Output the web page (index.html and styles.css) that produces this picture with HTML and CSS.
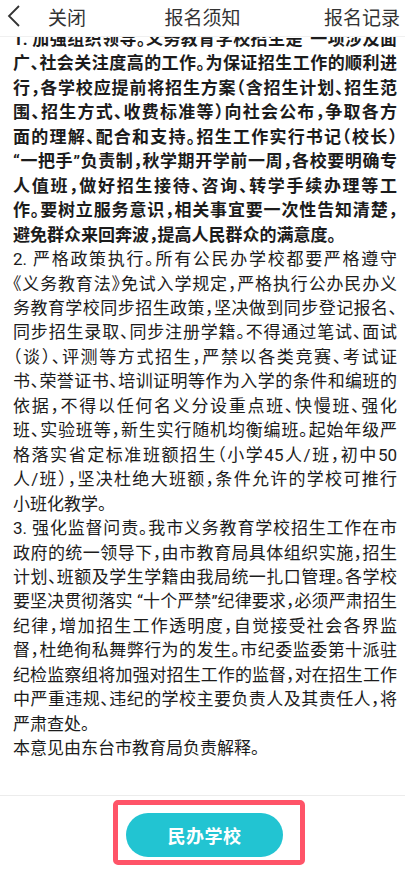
FILE: index.html
```html
<!DOCTYPE html>
<html lang="zh-CN">
<head>
    <meta charset="UTF-8">
    <meta name="viewport" content="width=device-width, initial-scale=1.0">
    <title>报名须知</title>
    <link rel="stylesheet" href="styles.css">
</head>
<body>
    <!-- 顶部导航 -->
    <div class="nav-bar">
        <div class="nav-left">
            <svg class="back-icon" width="14" height="24" viewBox="0 0 14 24">
                <polyline points="12,2 2,12 12,22" fill="none" stroke="#333" stroke-width="1.8" stroke-linejoin="miter"/>
            </svg>
            <span class="nav-close">关闭</span>
        </div>
        <div class="nav-title">报名须知</div>
        <div class="nav-right">报名记录</div>
    </div>

    <!-- 须知正文（已滚动），按截图逐行排版 -->
    <div class="notice-scroll">
        <div class="notice-text">
            <p class="strong">
                <span class="ln">1. 加强组织领导。义务教育学校招生是“一项涉及面</span>
                <span class="ln">广、社会关注度高的工作。为保证招生工作的顺利进</span>
                <span class="ln">行，各学校应提前将招生方案（含招生计划、招生范</span>
                <span class="ln">围、招生方式、收费标准等）向社会公布，争取各方</span>
                <span class="ln">面的理解、配合和支持。招生工作实行书记（校长）</span>
                <span class="ln">“一把手”负责制，秋学期开学前一周，各校要明确专</span>
                <span class="ln">人值班，做好招生接待、咨询、转学手续办理等工</span>
                <span class="ln">作。要树立服务意识，相关事宜要一次性告知清楚，</span>
                <span class="ln last">避免群众来回奔波，提高人民群众的满意度。</span>
            </p>
            <p>
                <span class="ln">2. 严格政策执行。所有公民办学校都要严格遵守</span>
                <span class="ln">《义务教育法》免试入学规定，严格执行公办民办义</span>
                <span class="ln">务教育学校同步招生政策，坚决做到同步登记报名、</span>
                <span class="ln">同步招生录取、同步注册学籍。不得通过笔试、面试</span>
                <span class="ln">（谈）、评测等方式招生，严禁以各类竞赛、考试证</span>
                <span class="ln">书、荣誉证书、培训证明等作为入学的条件和编班的</span>
                <span class="ln">依据，不得以任何名义分设重点班、快慢班、强化</span>
                <span class="ln">班、实验班等，新生实行随机均衡编班。起始年级严</span>
                <span class="ln">格落实省定标准班额招生（小学45人/班，初中50</span>
                <span class="ln">人/班），坚决杜绝大班额，条件允许的学校可推行</span>
                <span class="ln last">小班化教学。</span>
            </p>
            <p>
                <span class="ln">3. 强化监督问责。我市义务教育学校招生工作在市</span>
                <span class="ln">政府的统一领导下，由市教育局具体组织实施，招生</span>
                <span class="ln">计划、班额及学生学籍由我局统一扎口管理。各学校</span>
                <span class="ln">要坚决贯彻落实 “十个严禁”纪律要求，必须严肃招生</span>
                <span class="ln">纪律，增加招生工作透明度，自觉接受社会各界监</span>
                <span class="ln">督，杜绝徇私舞弊行为的发生。市纪委监委第十派驻</span>
                <span class="ln">纪检监察组将加强对招生工作的监督，对在招生工作</span>
                <span class="ln">中严重违规、违纪的学校主要负责人及其责任人，将</span>
                <span class="ln last">严肃查处。</span>
            </p>
            <p>
                <span class="ln last">本意见由东台市教育局负责解释。</span>
            </p>
        </div>
    </div>

    <!-- 底部按钮 -->
    <div class="footer">
        <button class="school-button">民办学校</button>
        <div class="mark-box"></div>
    </div>
</body>
</html>
```

FILE: styles.css
```css
/* 通用 */
* {
    box-sizing: border-box;
}

body {
    margin: 0;
    height: 100vh;
    display: flex;
    flex-direction: column;
    background: #fff;
    font-family: Roboto, "Noto Sans CJK SC", sans-serif;
    color: #1c1c1c;
    overflow: hidden;
}

/* 顶部导航 */
.nav-bar {
    position: relative;
    height: 37px;
    flex-shrink: 0;
    display: flex;
    align-items: center;
    justify-content: space-between;
    padding: 0 5px 4px 7px;
    background: #fff;
    border-bottom: 1px solid #f0f0f0;
    font-family: "Noto Sans CJK SC", sans-serif;
    font-size: 19px;
    color: #333;
    z-index: 2;
}

.nav-left {
    display: flex;
    align-items: center;
}

.back-icon {
    display: block;
}

.nav-close {
    margin-left: 27px;
}

.nav-title {
    position: absolute;
    left: 0;
    right: 0;
    top: 0;
    height: 33px;
    line-height: 33px;
    text-align: center;
    pointer-events: none;
}

/* 正文 */
.notice-scroll {
    flex: 1;
    overflow: hidden;
}

.notice-text {
    margin-top: -10px;
    padding: 0 8px 0 13px;
    font-size: 17px;
    line-height: 24.46px;
    font-feature-settings: "halt";
}

.notice-text p {
    margin: 0;
}

.notice-text .strong {
    font-weight: bold;
}

.ln {
    display: block;
    text-align: justify;
    text-align-last: justify;
}

.ln.last {
    text-align-last: left;
}

/* 底部 */
.footer {
    position: relative;
    height: 74px;
    flex-shrink: 0;
    border-top: 1px solid #ececec;
    display: flex;
    justify-content: center;
    align-items: flex-start;
    padding: 17px 0 0 4px;
}

.school-button {
    width: 157px;
    height: 44px;
    border: none;
    border-radius: 22px;
    background-color: #22c4d2;
    color: #fff;
    font-family: "Noto Sans CJK SC", sans-serif;
    font-size: 18px;
    font-weight: bold;
    letter-spacing: 0.5px;
}

/* 标注框 */
.mark-box {
    position: absolute;
    left: 113px;
    top: 4px;
    width: 192px;
    height: 65px;
    border: 5px solid #ff5468;
    border-radius: 5px;
}
```
